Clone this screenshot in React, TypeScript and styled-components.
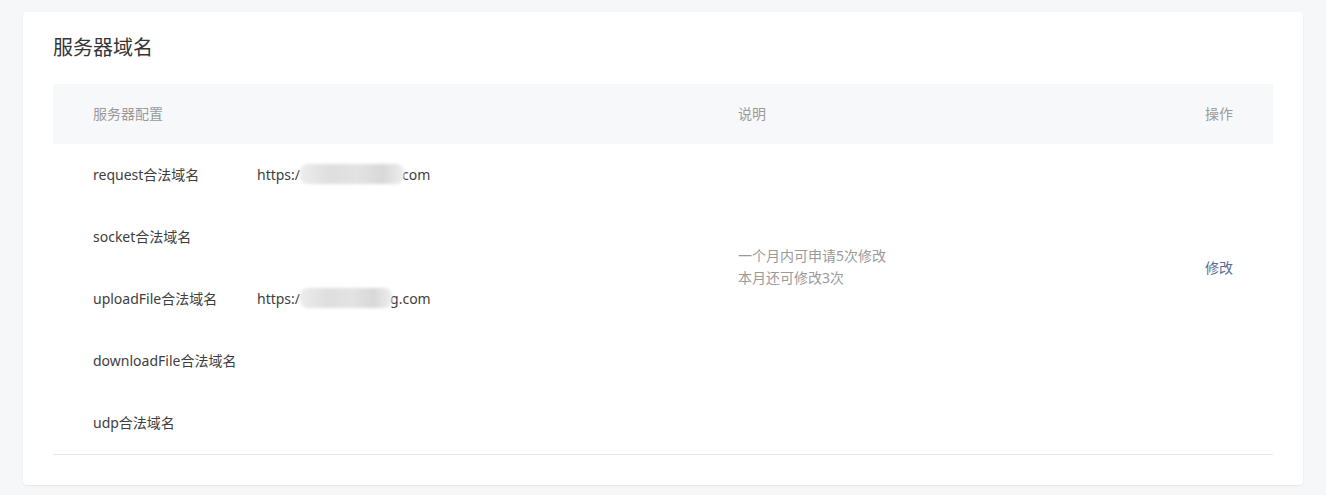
import styled, { createGlobalStyle } from 'styled-components';

const GlobalStyle = createGlobalStyle`
  html, body {
    margin: 0;
    padding: 0;
    background: #f6f7f9;
    font-family: "Noto Sans", "Noto Sans CJK SC", sans-serif;
  }
`;

interface DomainRow {
  label: string;
  prefix?: string;
  suffix?: string;
  blurWidth?: number;
}

const rows: DomainRow[] = [
  { label: 'request合法域名', prefix: 'https:/', suffix: 'com', blurWidth: 104 },
  { label: 'socket合法域名' },
  { label: 'uploadFile合法域名', prefix: 'https:/', suffix: 'g.com', blurWidth: 92 },
  { label: 'downloadFile合法域名' },
  { label: 'udp合法域名' },
];

const Page = styled.div`
  width: 1326px;
  height: 495px;
  box-sizing: border-box;
  padding: 12px 23px 10px;
`;

const Card = styled.div`
  height: 473px;
  box-sizing: border-box;
  background: #fff;
  border-radius: 4px;
  box-shadow: 0 1px 2px rgba(0, 0, 0, 0.08);
  padding: 23px 30px 30px;
`;

const Title = styled.h2`
  margin: 0 0 23px;
  font-size: 20px;
  line-height: 26px;
  font-weight: 400;
  color: #353535;
`;

const Table = styled.div`
  border-bottom: 1px solid #e7e7eb;
`;

const HeadRow = styled.div`
  display: grid;
  grid-template-columns: 645px 1fr auto;
  height: 60px;
  box-sizing: border-box;
  padding-bottom: 3px;
  align-items: center;
  background: #f7f8fa;
  font-size: 14px;
  color: #9a9a9a;
`;

const HeadCell = styled.div<{ $right?: boolean }>`
  padding: ${(p) => (p.$right ? '0 40px 0 0' : '0 0 0 40px')};
`;

const Body = styled.div`
  display: grid;
  grid-template-columns: 645px 1fr auto;
`;

const DomainList = styled.div`
  display: flex;
  flex-direction: column;
`;

const DomainItem = styled.div`
  display: flex;
  align-items: center;
  height: 62px;
  box-sizing: border-box;
  padding: 0 0 2px 40px;
  font-size: 14px;
  color: #3e3e3e;
`;

const DomainLabel = styled.span`
  width: 164px;
  white-space: nowrap;
`;

const DomainValue = styled.span`
  display: inline-flex;
  align-items: center;
  white-space: nowrap;
`;

const Blur = styled.span<{ $w: number }>`
  display: inline-block;
  width: ${(p) => p.$w}px;
  height: 20px;
  margin-right: -2px;
  border-radius: 8px;
  background: linear-gradient(90deg, #ececec 0%, #dedede 30%, #e3e3e3 55%, #d8d8d8 80%, #eeeeee 100%);
  filter: blur(1.5px);
  position: relative;
  z-index: 1;
`;

const Desc = styled.div`
  display: flex;
  flex-direction: column;
  justify-content: center;
  padding: 0 0 64px 40px;
  font-size: 14px;
  line-height: 22px;
  color: #9a9a9a;
`;

const Action = styled.div`
  display: flex;
  align-items: center;
  padding: 0 40px 64px 0;
`;

const Link = styled.a`
  font-size: 14px;
  color: #576b95;
  text-decoration: none;
  cursor: pointer;
`;

export default function App() {
  return (
    <>
      <GlobalStyle />
      <Page>
        <Card>
          <Title>服务器域名</Title>
          <Table>
            <HeadRow>
              <HeadCell>服务器配置</HeadCell>
              <HeadCell>说明</HeadCell>
              <HeadCell $right>操作</HeadCell>
            </HeadRow>
            <Body>
              <DomainList>
                {rows.map((row) => (
                  <DomainItem key={row.label}>
                    <DomainLabel>{row.label}</DomainLabel>
                    {row.prefix && (
                      <DomainValue>
                        {row.prefix}
                        <Blur $w={row.blurWidth || 90} />
                        {row.suffix}
                      </DomainValue>
                    )}
                  </DomainItem>
                ))}
              </DomainList>
              <Desc>
                <span>一个月内可申请5次修改</span>
                <span>本月还可修改3次</span>
              </Desc>
              <Action>
                <Link>修改</Link>
              </Action>
            </Body>
          </Table>
        </Card>
      </Page>
    </>
  );
}
